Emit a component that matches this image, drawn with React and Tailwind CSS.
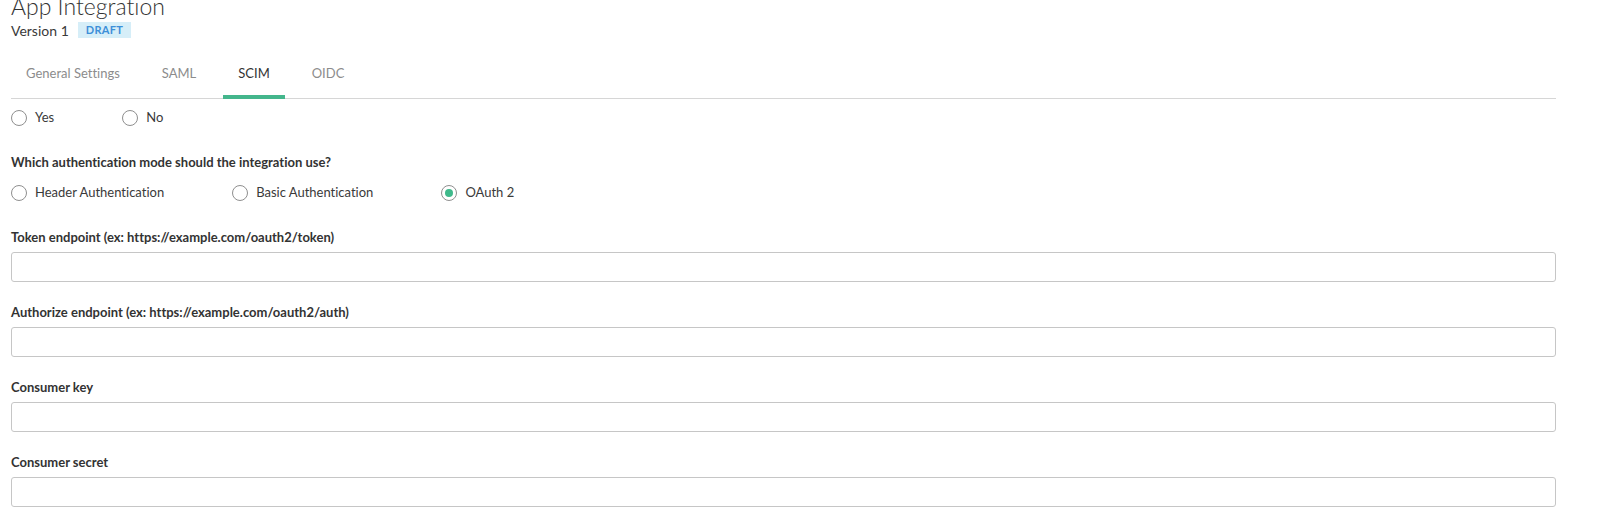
import React, { useState } from "react";

const tabs = ["General Settings", "SAML", "SCIM", "OIDC"];

function Radio({ label, checked, onChange }) {
    return (
        <label className="flex items-center h-4 mr-[68px] cursor-pointer" onClick={onChange}>
            <span className="w-4 h-4 rounded-full border border-[#8f8f8f] bg-white flex items-center justify-center">
                {checked && <span className="w-2 h-2 rounded-full bg-[#3fb98b]" />}
            </span>
            <span className="ml-2 text-[13px] text-[#3a3a3a]">{label}</span>
        </label>
    );
}

function Field({ label, first }) {
    return (
        <div className={first ? "mt-[27px]" : "mt-[21px]"}>
            <div className="text-[13px] leading-[18px] font-bold text-[#333]">{label}</div>
            <input
                type="text"
                className="mt-[6px] block w-full h-[30px] rounded-[3px] border border-[#c6c6c6] bg-white px-2 text-[13px] outline-none"
            />
        </div>
    );
}

function App() {
    const [tab, setTab] = useState("SCIM");
    const [provision, setProvision] = useState("");
    const [authMode, setAuthMode] = useState("OAuth 2");

    return (
        <div className="min-h-screen bg-white pl-[11px] pr-[52px] overflow-hidden font-['Lato',_'Liberation_Sans',_sans-serif] [font-variant-ligatures:none] text-[#333]">
            <h1 className="-mt-[8px] text-[23px] leading-[28px] font-light text-[#333]">App Integration</h1>
            <div className="mt-[2px] flex items-center h-[16px]">
                <span className="text-[14px] text-[#3a3a3a]">Version 1</span>
                <span className="ml-[9px] h-[16px] px-[8px] flex items-center bg-[#d6eef8] text-[#3d8fd8] text-[11px] font-bold tracking-[0.3px]">DRAFT</span>
            </div>

            <div className="mt-[13px] flex gap-[12px] border-b border-[#d6d6d6]">
                {tabs.map((t) => (
                    <button
                        key={t}
                        onClick={() => setTab(t)}
                        className={
                            "px-[15px] pt-[12px] pb-[12px] -mb-px text-[13px] leading-[20px] border-b-4 " +
                            (t === tab ? "border-[#44b68c] text-[#333]" : "border-transparent text-[#8c8c8c]")
                        }
                    >
                        {t}
                    </button>
                ))}
            </div>

            <div className="mt-[11px] flex">
                <Radio label="Yes" checked={provision === "Yes"} onChange={() => setProvision("Yes")} />
                <Radio label="No" checked={provision === "No"} onChange={() => setProvision("No")} />
            </div>

            <div className="mt-[27px] text-[13px] leading-[18px] font-bold text-[#333]">
                Which authentication mode should the integration use?
            </div>
            <div className="mt-[14px] flex">
                {["Header Authentication", "Basic Authentication", "OAuth 2"].map((m) => (
                    <Radio key={m} label={m} checked={authMode === m} onChange={() => setAuthMode(m)} />
                ))}
            </div>

            <Field first label="Token endpoint (ex: https://example.com/oauth2/token)" />
            <Field label="Authorize endpoint (ex: https://example.com/oauth2/auth)" />
            <Field label="Consumer key" />
            <Field label="Consumer secret" />
        </div>
    );
}

export default App;
